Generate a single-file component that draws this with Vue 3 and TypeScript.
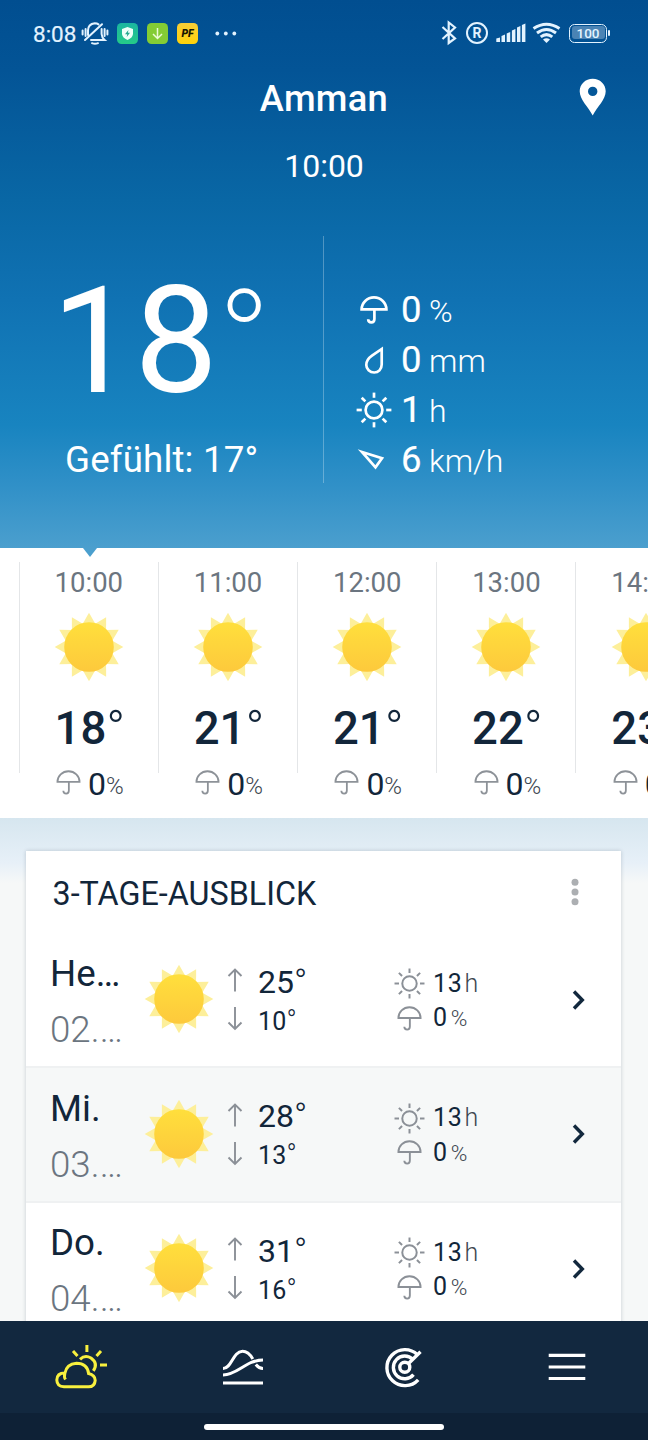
<script setup lang="ts">
interface Hour { time: string; temp: number; rain: number }
interface Day { name: string; date: string; high: number; low: number; sun: number; rain: number }

const hours: Hour[] = [
  { time: '10:00', temp: 18, rain: 0 },
  { time: '11:00', temp: 21, rain: 0 },
  { time: '12:00', temp: 21, rain: 0 },
  { time: '13:00', temp: 22, rain: 0 },
  { time: '14:00', temp: 23, rain: 0 },
]

const days: Day[] = [
  { name: 'He…', date: '02.…', high: 25, low: 10, sun: 13, rain: 0 },
  { name: 'Mi.', date: '03.…', high: 28, low: 13, sun: 13, rain: 0 },
  { name: 'Do.', date: '04.…', high: 31, low: 16, sun: 13, rain: 0 },
]

const rays: number[] = Array.from({ length: 12 }, (_, i) => i * 30)
const beams: number[] = Array.from({ length: 8 }, (_, i) => i * 45)
</script>

<template>
  <div class="screen">
    <svg class="defs" width="0" height="0" aria-hidden="true">
      <defs>
        <linearGradient id="sunFill" x1="0" y1="0" x2="0" y2="1">
          <stop offset="0" stop-color="#ffdf3c" />
          <stop offset="1" stop-color="#fdc93c" />
        </linearGradient>
        <symbol id="sun" viewBox="-35 -35 70 70">
          <path v-for="a in rays" :key="a" d="M-7 -22L0 -34.3L7 -22Z" :transform="`rotate(${a})`" fill="#fdef9a" />
          <circle r="24.8" fill="url(#sunFill)" />
        </symbol>
        <symbol id="umbrella" viewBox="0 0 28 28">
          <path d="M1.6 13.4A12.4 12 0 0 1 26.4 13.4Z M14.4 13.4V23Q14.4 26.4 11.400 26.4Q8.2 26.4 8.2 23.3" fill="none" stroke="currentColor" />
        </symbol>
        <symbol id="shine" viewBox="-18 -18 36 36">
          <circle r="8.4" fill="none" stroke="currentColor" />
          <path v-for="a in beams" :key="a" d="M0 -12.2V-17.4" :transform="`rotate(${a})`" stroke="currentColor" />
        </symbol>
      </defs>
    </svg>

    <header class="hero">
      <div class="status">
        <div class="status-left">
          <span class="clock">8:08</span>
          <svg class="bell" width="28" height="24" viewBox="81 21 28 24" fill="none" stroke="#e3f3ff" stroke-width="2" stroke-linecap="round">
            <path d="M88 35V30.5Q88 24 94.8 23.2Q97 23.2 98.5 24.4M101.6 29V34Q101.8 37.5 104.6 39.9H91M85 40L102 24.2M92 43.2Q95 44.5 98 43.2M85.6 29V36M82.6 30.5V34.5M104.6 29V36M107.4 30.5V34.5" />
          </svg>
          <svg class="badge-shield" width="21" height="21" viewBox="0 0 21 21">
            <defs><linearGradient id="teal" x2="0" y2="1"><stop stop-color="#1bb5a0" /><stop offset="1" stop-color="#25ca88" /></linearGradient></defs>
            <rect width="21" height="21" rx="4.5" fill="url(#teal)" />
            <path d="M10.5 4L16 6V11Q15.6 14.8 10.5 17Q5.400 14.8 5 11V6Z" fill="#effff9" />
            <path d="M11.400 7L8 11.200H10.200L9.700 14L13 9.800H10.900Z" fill="#24a990" />
          </svg>
          <svg class="badge-down" width="21" height="21" viewBox="0 0 21 21">
            <rect width="21" height="21" rx="4.500" fill="#84cc34" />
            <path d="M10.500 5V15.500M6 11L10.500 15.500L15 11" fill="none" stroke="#ecfbd6" stroke-width="1.500" />
          </svg>
          <span class="badge-pf">PF</span>
          <svg class="more" width="22" height="5" viewBox="0 0 22 5" fill="#e3f3ff"><circle cx="2.300" cy="2.500" r="1.900" /><circle cx="10.800" cy="2.500" r="1.900" /><circle cx="19.300" cy="2.500" r="1.900" /></svg>
        </div>
        <div class="status-right">
          <svg width="17" height="24" viewBox="441 21 17 24" fill="none" stroke="#e3f3ff" stroke-width="2.200"><path d="M442.500 27L455 38.500L448.700 43V22.500L455 27.500L442.500 39" /></svg>
          <span class="registered">R</span>
          <svg class="signal" width="30" height="20" viewBox="496 24 30 20" fill="#e3f3ff">
            <path d="M496.300 39.500L500 38.500V43H496.300ZM501.500 37L505 35.500V43H501.500ZM506.700 34.500L510.200 33V43H506.700ZM511.900 31.500L515.400 30V43H511.900ZM517 28.500L520.400 27V43H517ZM521.900 26L525.400 24.500V43H521.900Z" />
          </svg>
          <svg class="wifi" width="29" height="22" viewBox="532 22 29 22" fill="none" stroke="#e3f3ff" stroke-width="3">
            <path d="M533.500 28.500Q546.500 20 559.500 28.500M537 33Q546.500 26 556 33M540.700 36.900Q546.500 32.300 552.300 36.900" />
            <path d="M543 39.500Q546.500 37 550 39.500L546.500 43Z" fill="#e3f3ff" stroke="none" />
          </svg>
          <span class="battery"><span class="battery-level">100</span></span>
          <span class="battery-nub"></span>
        </div>
      </div>

      <div class="title-bar">
        <h1>Amman</h1>
        <svg class="pin" width="28" height="38" viewBox="0 0 28 38">
          <path fill="#fff" fill-rule="evenodd" d="M13.700 0.700C6.400 0.700 .7 6.200 .7 13.200C.7 21.500 9 28.500 13.700 37.500C18.400 28.500 26.700 21.500 26.700 13.200C26.700 6.200 21 .7 13.700 .7ZM13.700 8.700A4.700 4.700 0 1 1 13.700 18.100A4.700 4.700 0 1 1 13.700 8.700Z" />
        </svg>
      </div>
      <div class="now">10:00</div>

      <div class="current">
        <div class="current-temp">
          <div class="big"><span class="big-num">18</span><span class="big-deg">°</span></div>
          <div class="feels">Gefühlt: 17°</div>
        </div>
        <div class="stats">
          <div class="stat">
            <span class="stat-icon"><svg width="28" height="28" stroke-width="2.700"><use href="#umbrella" /></svg></span>
            <b>0</b><i>%</i>
          </div>
          <div class="stat">
            <span class="stat-icon"><svg width="20" height="28" viewBox="0 0 20 28"><path d="M17.700 3V18.400C17.700 23.400 14.300 26.500 10.200 26.500C5.800 26.500 2.300 23 2.300 18.900C2.300 15.300 4.500 12 8 9.600Z" fill="none" stroke="currentColor" stroke-width="2.700" /></svg></span>
            <b>0</b><i>mm</i>
          </div>
          <div class="stat">
            <span class="stat-icon"><svg width="36" height="36" stroke-width="2.700"><use href="#shine" /></svg></span>
            <b>1</b><i>h</i>
          </div>
          <div class="stat">
            <span class="stat-icon"><svg width="34" height="24" viewBox="357 448 34 24"><path d="M362 452L382 458.300L375.500 467.300Z" fill="none" stroke="currentColor" stroke-width="2.700" stroke-miterlimit="10" /></svg></span>
            <b>6</b><i>km/h</i>
          </div>
        </div>
      </div>
    </header>

    <main class="content">
      <section class="hourly">
        <svg class="marker" width="14" height="9" viewBox="0 0 14 9"><path d="M0 0H14L7 9Z" fill="#4b9fce" /></svg>
        <div v-for="h in hours" :key="h.time" class="hour">
          <div class="hour-main">
            <span class="hour-time">{{ h.time }}</span>
            <svg class="hour-sun" width="70" height="70"><use href="#sun" /></svg>
            <span class="hour-temp">{{ h.temp }}<span class="deg">°</span></span>
          </div>
          <div class="hour-rain">
            <svg width="25" height="25" stroke-width="2"><use href="#umbrella" /></svg>
            <span class="rain-value">{{ h.rain }}</span><span class="rain-unit">%</span>
          </div>
        </div>
      </section>

      <section class="card">
        <div class="card-head">
          <h2>3-TAGE-AUSBLICK</h2>
          <svg width="8" height="28" viewBox="0 0 8 28" fill="#acafb2"><circle cx="4" cy="4.200" r="3.500" /><circle cx="4" cy="14" r="3.500" /><circle cx="4" cy="23.800" r="3.500" /></svg>
        </div>
        <div v-for="d in days" :key="d.name" class="day">
          <div class="day-label">
            <span class="day-name">{{ d.name }}</span>
            <span class="day-date">{{ d.date }}</span>
          </div>
          <svg class="day-sun" width="70" height="70"><use href="#sun" /></svg>
          <div class="day-temps">
            <svg class="arrows" width="16" height="64" viewBox="0 0 16 64" fill="none" stroke="#8b9097" stroke-width="1.900">
              <path d="M8 24.500V2.500M1.500 9L8 2.500L14.500 9M8 40V62M1.500 55.500L8 62L14.500 55.500" />
            </svg>
            <div class="values">
              <span class="high">{{ d.high }}<span class="deg">°</span></span>
              <span class="low">{{ d.low }}<span class="deg">°</span></span>
            </div>
          </div>
          <div class="day-extra">
            <div class="extra"><span class="extra-icon"><svg width="31" height="31" stroke-width="2.300"><use href="#shine" /></svg></span><b>{{ d.sun }}</b><i>h</i></div>
            <div class="extra"><span class="extra-icon"><svg width="25" height="25" stroke-width="2.100"><use href="#umbrella" /></svg></span><b>{{ d.rain }}</b><i class="pct">%</i></div>
          </div>
          <svg class="chevron" width="14" height="20" viewBox="0 0 14 20"><path d="M2 1.500L10.300 10L2 18.500" fill="none" stroke="#12283d" stroke-width="3.400" /></svg>
        </div>
      </section>
    </main>

    <nav class="tabs">
      <div class="tab-row">
        <span class="tab">
          <svg width="54" height="46" viewBox="54 1343 54 46" fill="none" stroke="#f8f03e" stroke-width="3">
            <path d="M65.500 1378.500Q63.800 1376 64.800 1372.500Q66.500 1363 76.500 1362.300Q87.300 1362.500 88.600 1372.500Q95 1374 95.200 1379.300Q94.800 1385.800 88.500 1385.800H64Q57 1385.500 56.800 1379Q57 1372 64.800 1372M80 1358.300Q85 1353.500 91 1357Q98.500 1362.500 93.300 1369.800M86.900 1344V1351M73 1350L77.500 1355M101 1350L96.500 1355M100 1364H107" />
          </svg>
        </span>
        <span class="tab">
          <svg width="42" height="38" viewBox="222 1347 42 38" fill="none" stroke="#fff" stroke-width="3">
            <path d="M223 1367.500C232 1367.500 232.500 1350.500 242.500 1350.300C248 1350.300 250.500 1354 252.800 1358M255.800 1363.500Q259 1367.500 263 1367.500M223 1374C238 1374 246 1359 263 1359M223 1382H263" />
          </svg>
        </span>
        <span class="tab">
          <svg width="40" height="42" viewBox="385 1346 40 42" fill="none" stroke="#fff" stroke-width="3.400">
            <circle cx="404.800" cy="1367.300" r="5" />
            <path d="M408.500 1363.500L420.500 1351.800M417.400 1354.700A18 18 0 1 0 418.200 1379.800M412.800 1359.300A11.400 11.400 0 1 0 413.500 1374.700" />
          </svg>
        </span>
        <span class="tab">
          <svg width="38" height="28" viewBox="0 0 38 28" stroke="#fff" stroke-width="3.200"><path d="M.7 2.300H37.300M.7 14H37.300M.7 25.500H37.300" /></svg>
        </span>
      </div>
      <div class="gesture"><span class="pill"></span></div>
    </nav>
  </div>
</template>

<style>
body { margin: 0; }
</style>

<style scoped>
.screen {
  width: 648px;
  height: 1440px;
  overflow: hidden;
  display: flex;
  flex-direction: column;
  font-family: Roboto, "Liberation Sans", sans-serif;
  color: #12263a;
  background: #f6f8f8;
}
.screen *, .screen { box-sizing: border-box; }
.defs { position: absolute; }
svg { display: block; flex: none; overflow: visible; }
b { font-weight: 400; }
i { font-style: normal; font-weight: 300; }

.hero {
  flex: none;
  height: 548px;
  color: #fff;
  background: linear-gradient(#014e90 0, #035496 70px, #0967a5 200px, #1072b3 300px, #1884c0 425px, #2e8fc7 480px, #4b9fce 548px);
}
.status {
  height: 66px;
  padding: 0 38px 0 33px;
  display: flex;
  justify-content: space-between;
  align-items: center;
  color: #e3f3ff;
}
.status-left, .status-right { display: flex; align-items: center; }
.clock { font-size: 22.5px; line-height: 24px; width: 48px; margin-top: 1px; -webkit-text-stroke: .2px #e3f3ff; }
.badge-shield { margin-left: 8px; }
.badge-down { margin-left: 9px; }
.badge-pf {
  width: 21px;
  height: 21px;
  margin-left: 9px;
  border-radius: 4.5px;
  background: linear-gradient(#f7ce38, #ffd20a);
  color: #181600;
  font-size: 10.5px;
  line-height: 21px;
  font-weight: 900;
  font-style: italic;
  text-align: center;
}
.more { margin-left: 17px; }
.registered {
  width: 22px;
  height: 22px;
  margin-left: 8px;
  border: 2px solid #e3f3ff;
  border-radius: 50%;
  font-size: 14px;
  line-height: 18.5px;
  font-weight: 700;
  text-align: center;
}
.signal { margin-left: 8px; }
.wifi { margin-left: 6px; }
.battery {
  width: 38px;
  height: 19px;
  margin-left: 8px;
  padding: 1.5px;
  border: 1.700px solid #e3f3ff;
  border-radius: 5.5px;
}
.battery-level {
  display: block;
  height: 12.600px;
  border-radius: 3px;
  background: #4a83b4;
  font-size: 13.500px;
  line-height: 14px;
  font-weight: 500;
  text-align: center;
}
.battery-nub { width: 2px; height: 6px; margin-left: 1px; border-radius: 1px; background: #e3f3ff; }

.title-bar {
  height: 64px;
  padding: 0 41px 0 69px;
  display: flex;
  justify-content: space-between;
  align-items: center;
}
h1 { margin: 0; flex: 1; padding: 1px 0 0 0; text-align: center; font-size: 36.300px; line-height: 44px; font-weight: 500; letter-spacing: .3px; }
.pin { margin-top: -2px; }
.now { height: 106px; padding-top: 20px; font-size: 32px; line-height: 33px; text-align: center; font-weight: 400; }
.current { display: flex; height: 247px; }
.current-temp { width: 324px; border-right: 1.500px solid rgba(255, 255, 255, .28); }
.big { display: flex; height: 206px; padding-left: 51.500px; font-size: 149px; line-height: 211px; }
.big-num { letter-spacing: -1px; }
.big-deg { font-weight: 200; font-size: 143px; line-height: 213px; }
.feels { padding-left: 65px; font-size: 36.700px; line-height: 36px; letter-spacing: .15px; }
.stats { padding-top: 49px; padding-left: 30px; }
.stat { display: flex; height: 50px; align-items: center; }
.stat-icon { width: 40px; display: flex; justify-content: center; }
.stat b { width: 28px; margin-left: 7px; font-size: 36.500px; line-height: 50px; -webkit-text-stroke: .2px #fff; }
.stat i { font-size: 32px; line-height: 52px; padding-top: 2px; }

.content { flex: 1; min-height: 0; overflow: hidden; background: linear-gradient(#d6e6ef 270px, #e7f0f8 315px, #f6f8f8 335px); }
.hourly {
  position: relative;
  height: 270px;
  padding: 14px 0 0 18.500px;
  display: flex;
  background: #fff;
  overflow: hidden;
}
.marker { position: absolute; left: 82.500px; top: 0; }
.hour { flex: none; width: 139.200px; }
.hour-main {
  height: 211px;
  border-left: 1.500px solid #e4e6e8;
  padding: 7px 0 0 .5px;
  display: flex;
  flex-direction: column;
  align-items: center;
}
.hour-time { font-size: 27.500px; line-height: 28px; color: #6b7580; font-weight: 400; }
.hour-sun { margin-top: 15px; }
.hour-temp { height: 48px; margin: 23px 0 0 2px; font-size: 45.500px; line-height: 48px; font-weight: 500; white-space: nowrap; }
.hour-temp .deg { font-weight: 300; font-size: 50px; line-height: 1px; vertical-align: -2px; }
.hour-rain { display: flex; height: 22px; padding-left: 37.500px; color: #8d9298; }
.hour-rain svg { margin-top: -3px; }
.rain-value { margin-left: 7px; font-size: 32px; line-height: 22px; color: #12263a; }
.rain-unit { font-size: 24px; line-height: 27px; color: #3c4650; font-weight: 300; }

.card {
  width: 595px;
  margin: 33px 0 0 26px;
  background: #fff;
  box-shadow: 0 0 4px rgba(30, 50, 70, .22);
}
.card-head { height: 80.500px; padding: 1px 42px 0 26.500px; display: flex; justify-content: space-between; align-items: center; }
h2 { margin: 0; padding-top: 5px; font-size: 32.300px; line-height: 40px; font-weight: 400; }
.day { display: flex; height: 134.500px; border-top: 2px solid transparent; }
.day:nth-child(odd) { background: #f6f8f8; border-top-color: #eff1f2; }
.day:nth-child(4) { border-top-color: #eff1f2; }
.day-label { width: 118px; padding: 19.500px 0 0 24px; display: flex; flex-direction: column; }
.day-name { font-size: 36.700px; line-height: 42px; }
.day-date { margin-top: 14px; font-size: 36.700px; line-height: 42px; font-weight: 300; color: #6b7580; }
.day-sun { margin-top: 30.500px; }
.day-temps { display: flex; padding: 33.500px 0 0 13px; width: 177.500px; }
.values { margin-top: -1.500px; padding-left: 15px; display: flex; flex-direction: column; }
.high { height: 33px; font-size: 32px; line-height: 33px; white-space: nowrap; }
.high .deg { font-size: 35px; line-height: 1px; vertical-align: -1px; }
.low { height: 31px; margin-top: 7px; font-size: 25px; line-height: 31px; letter-spacing: .2px; }
.low .deg { font-size: 27px; line-height: 1px; }
.deg { font-weight: 300; }
.day-extra { padding-top: 33px; width: 180px; }
.extra { display: flex; height: 34.500px; align-items: center; color: #8b9097; }
.extra-icon { width: 35px; display: flex; justify-content: center; }
.extra b { margin-left: 6.500px; font-size: 25px; line-height: 34px; letter-spacing: .7px; color: #12263a; }
.extra i { margin-left: 2px; font-size: 25px; line-height: 34px; color: #3c4650; }
.extra .pct { margin-left: 3px; font-size: 22.500px; }
.chevron { margin-top: 56px; }

.tabs { flex: none; height: 119px; background: #12283f; color: #fff; display: flex; flex-direction: column; }
.tab-row { height: 92px; display: flex; }
.tab { width: 162px; display: flex; justify-content: center; align-items: center; }
.gesture { flex: 1; padding-top: 11px; background: #0e2136; }
.pill { display: block; width: 239.500px; height: 6px; margin-left: 204px; border-radius: 3px; background: #fff; }
</style>
